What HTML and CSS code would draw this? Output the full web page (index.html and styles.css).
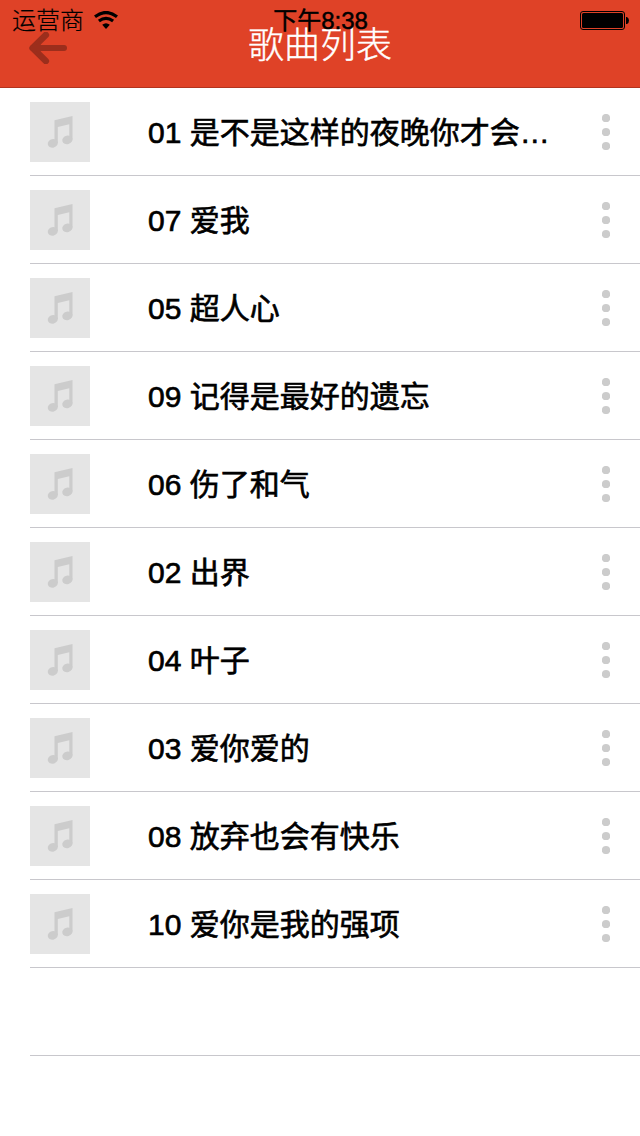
FILE: index.html
```html
<!doctype html>
<html lang="zh-CN">
    <head>
        <meta charset="utf-8" />
        <title>歌曲列表</title>
        <link rel="stylesheet" href="styles.css" />
    </head>
    <body>
        <svg class="defs">
            <symbol id="note" viewBox="0 0 60 60">
                <path d="M24.5 18.3L42.5 14V37.5H39.3V22.2L27.8 25V41H24.5Z" />
                <ellipse cx="22.8" cy="41.4" rx="5.1" ry="4.2" transform="rotate(-15 22.8 41.4)" />
                <ellipse cx="37.4" cy="37.9" rx="5.2" ry="4.2" transform="rotate(-15 37.4 37.9)" />
            </symbol>
            <symbol id="dots" viewBox="0 0 8 36">
                <circle cx="4" cy="4" r="4.1" />
                <circle cx="4" cy="18" r="4.1" />
                <circle cx="4" cy="32" r="4.1" />
            </symbol>
        </svg>

        <header class="navbar">
            <svg class="back" viewBox="0 0 38 32">
                <path class="head" d="M16.8 3L3.6 16L16.8 29" />
                <path class="inner" d="M4 16L11.5 9V23Z" />
                <path class="shaft" d="M4 16H35" />
            </svg>
            <h1 class="title">歌曲列表</h1>
            <div class="status">
                <div class="carrier">
                    <span>运营商</span>
                    <svg class="wifi" viewBox="0 0 24 18">
                        <path class="arc" d="M1 5.8Q12 -2.8 23 5.8M4.9 10Q12 4.6 19.1 10" />
                        <path d="M8.2 13.7Q12 10.7 15.8 13.7L12 17.9Z" />
                    </svg>
                </div>
                <div class="time">下午8:38</div>
                <svg class="battery" viewBox="0 0 49 19">
                    <rect class="shell" x="0.5" y="0.5" width="44" height="18" rx="2.5" />
                    <rect x="2" y="2" width="41" height="15" rx="1.5" />
                    <path d="M46 6H47Q49 7 49 9.5T47 13H46Z" />
                </svg>
            </div>
        </header>

        <ul class="songs">
            <li class="song">
                <svg class="thumb"><use href="#note" /></svg>
                <span class="name">01 是不是这样的夜晚你才会…</span>
                <svg class="more"><use href="#dots" /></svg>
            </li>
            <li class="song">
                <svg class="thumb"><use href="#note" /></svg>
                <span class="name">07 爱我</span>
                <svg class="more"><use href="#dots" /></svg>
            </li>
            <li class="song">
                <svg class="thumb"><use href="#note" /></svg>
                <span class="name">05 超人心</span>
                <svg class="more"><use href="#dots" /></svg>
            </li>
            <li class="song">
                <svg class="thumb"><use href="#note" /></svg>
                <span class="name">09 记得是最好的遗忘</span>
                <svg class="more"><use href="#dots" /></svg>
            </li>
            <li class="song">
                <svg class="thumb"><use href="#note" /></svg>
                <span class="name">06 伤了和气</span>
                <svg class="more"><use href="#dots" /></svg>
            </li>
            <li class="song">
                <svg class="thumb"><use href="#note" /></svg>
                <span class="name">02 出界</span>
                <svg class="more"><use href="#dots" /></svg>
            </li>
            <li class="song">
                <svg class="thumb"><use href="#note" /></svg>
                <span class="name">04 叶子</span>
                <svg class="more"><use href="#dots" /></svg>
            </li>
            <li class="song">
                <svg class="thumb"><use href="#note" /></svg>
                <span class="name">03 爱你爱的</span>
                <svg class="more"><use href="#dots" /></svg>
            </li>
            <li class="song">
                <svg class="thumb"><use href="#note" /></svg>
                <span class="name">08 放弃也会有快乐</span>
                <svg class="more"><use href="#dots" /></svg>
            </li>
            <li class="song">
                <svg class="thumb"><use href="#note" /></svg>
                <span class="name">10 爱你是我的强项</span>
                <svg class="more"><use href="#dots" /></svg>
            </li>
            <li class="song"></li>
        </ul>
    </body>
</html>
```

FILE: styles.css
```css
* {
    box-sizing: border-box;
}
body {
    margin: 0;
    background: #fff;
    color: #000;
    font-family: "Liberation Sans", "Noto Sans CJK SC", sans-serif;
}
svg {
    display: block;
    flex: none;
}
.defs {
    display: none;
}

.navbar {
    position: relative;
    display: grid;
    grid-template-columns: 1fr auto 1fr;
    align-items: start;
    height: 88px;
    background: #df4227;
    border-bottom: 1px solid #b2341f;
}
.back {
    width: 38px;
    height: 32px;
    margin: 32px 0 0 29px;
    fill: none;
    stroke: #9c2e1c;
    stroke-width: 6;
    stroke-linecap: round;
    stroke-linejoin: round;
}
.back .head {
    stroke-width: 6.6;
}
.back .inner {
    fill: #9c2e1c;
    stroke: none;
}
.title {
    margin: 21px 0 0;
    color: #fff;
    font-size: 36px;
    font-weight: 300;
    line-height: 50px;
    -webkit-text-stroke: 0.4px #fff;
}

/* the status bar lies over the top of the navbar */
.status {
    position: absolute;
    top: 0;
    left: 0;
    right: 0;
    display: grid;
    grid-template-columns: 1fr auto 1fr;
    align-items: center;
    height: 40px;
    padding: 0 11px 0 12px;
    font-size: 24px;
    line-height: 42px;
}
.carrier {
    display: flex;
    align-items: center;
    gap: 10px;
    font-weight: 300;
    -webkit-text-stroke: 0.2px #000;
}
.wifi {
    width: 24px;
    height: 18px;
    margin-bottom: 2px;
}
.wifi .arc {
    fill: none;
    stroke: #000;
    stroke-width: 3.2;
}
.time {
    -webkit-text-stroke: 0.5px #000;
}
.battery {
    justify-self: end;
    width: 49px;
    height: 19px;
    margin-bottom: 2px;
}
.battery .shell {
    fill: none;
    stroke: #000;
}

.songs {
    margin: 0;
    padding: 0 0 0 30px;
    list-style: none;
}
.song {
    display: flex;
    align-items: center;
    height: 88px;
    padding-right: 30px;
    border-bottom: 1px solid #c8c7cc;
}
.thumb {
    width: 60px;
    height: 60px;
    margin-right: 58px;
    background: #e5e5e5;
    fill: #ccc;
}
.name {
    flex: 1;
    padding-top: 2px;
    font-size: 30px;
    line-height: 44px;
    white-space: nowrap;
    -webkit-text-stroke: 0.65px #000;
}
.more {
    width: 8px;
    height: 36px;
    fill: #ccc;
    overflow: visible;
}
```
